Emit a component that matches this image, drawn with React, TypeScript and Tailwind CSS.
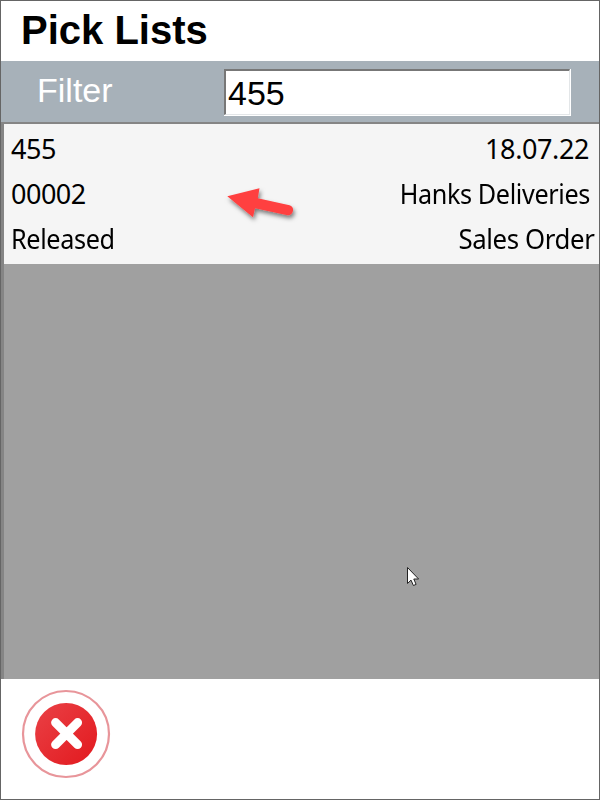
type Line = { left: string; right: string; leftClass: string; rightClass: string };

const lines: Line[] = [
  { left: '455', right: '18.07.22', leftClass: 'tracking-[-0.4px]', rightClass: 'mr-[10px] tracking-[-0.4px]' },
  {
    left: '00002',
    right: 'Hanks Deliveries',
    leftClass: 'tracking-[-0.5px]',
    rightClass: 'mr-[9px] origin-right scale-x-[0.933] tracking-[-0.4px]',
  },
  {
    left: 'Released',
    right: 'Sales Order',
    leftClass: 'origin-left scale-x-[0.935] tracking-[-0.4px]',
    rightClass: 'mr-[5px] origin-right scale-x-[0.955] tracking-[-0.4px]',
  },
];

function Arrow() {
  return (
    <svg className="absolute left-[220px] top-[180px]" width="84" height="48" viewBox="220 180 84 48">
      <defs>
        <filter id="shadow" x="-20%" y="-20%" width="150%" height="160%">
          <feDropShadow dx="1.5" dy="3" stdDeviation="2" floodColor="#000" floodOpacity="0.5" />
        </filter>
      </defs>
      <path
        filter="url(#shadow)"
        fill="#ff4040"
        d="M227.3 196.3L259.5 188.2L257.8 198.2L289.5 205.2Q293.6 206.5 293 210.8Q292 215.5 287.5 215.2L255 208.3L253 217.3Z"
      />
    </svg>
  );
}

function Cursor() {
  return (
    <svg className="absolute left-[406px] top-[566px]" width="14" height="22" viewBox="0 0 14 22">
      <path
        d="M1.5 1.5V17.5L5 14.1L7.4 19.5L10.1 18.4L7.8 13H12.6Z"
        fill="#fff"
        stroke="#222"
        strokeWidth="1"
      />
    </svg>
  );
}

function CloseIcon() {
  return (
    <svg width="90" height="90" viewBox="0 0 90 90">
      <defs>
        <linearGradient id="red" x1="0.1" y1="0.1" x2="0.9" y2="0.9">
          <stop offset="0" stopColor="#e93d42" />
          <stop offset="1" stopColor="#e31d22" />
        </linearGradient>
      </defs>
      <circle cx="45" cy="45" r="43" fill="#fff" stroke="#e8959a" strokeWidth="2.2" />
      <circle cx="45.1" cy="45" r="31" fill="url(#red)" />
      <path d="M34.6 33.6L56.6 55.6M56.6 33.6L34.6 55.6" stroke="#fff" strokeWidth="9" strokeLinecap="round" />
    </svg>
  );
}

export default function App() {
  return (
    <div className="relative flex h-[800px] w-[600px] flex-col overflow-hidden border border-[#656565] bg-white font-['Liberation_Sans',Arial,sans-serif] text-black">
      <header className="h-[60px] shrink-0 pl-[20px]">
        <h1 className="text-[40px] font-bold leading-[58px]">Pick Lists</h1>
      </header>
      <div className="flex h-[61px] shrink-0 items-start bg-[#a7b1b9] pl-[36px]">
        <label className="w-[187px] text-[34px] leading-[58px] text-white">Filter</label>
        <div className="mt-[8px] h-[47px] w-[347px] border-b border-r border-b-white border-r-white">
          <div className="h-[46px] border-b border-l-2 border-r border-t-2 border-b-[#e3e6e8] border-l-[#777] border-r-[#e3e6e8] border-t-[#777] bg-white pl-[2px] text-[34px] leading-[45px]">
            455
          </div>
        </div>
      </div>
      <main className="flex h-[557px] shrink-0 flex-col border-l-[3px] border-t-2 border-[#858585] bg-[#a0a0a0]">
        <section className="h-[140px] shrink-0 bg-[#f5f5f5] pl-[7px] pt-[2px] font-['Noto_Sans','Open_Sans',sans-serif] text-[27px] leading-[45px]">
          {lines.map((line) => (
            <div key={line.left} className="flex h-[45px] justify-between whitespace-nowrap">
              <span className={line.leftClass}>{line.left}</span>
              <span className={line.rightClass}>{line.right}</span>
            </div>
          ))}
        </section>
      </main>
      <footer className="flex flex-1 items-start pl-[20px] pt-[10px]">
        <button className="block" aria-label="Close">
          <CloseIcon />
        </button>
      </footer>
      <div className="absolute -left-px -top-px">
        <Arrow />
        <Cursor />
      </div>
    </div>
  );
}
